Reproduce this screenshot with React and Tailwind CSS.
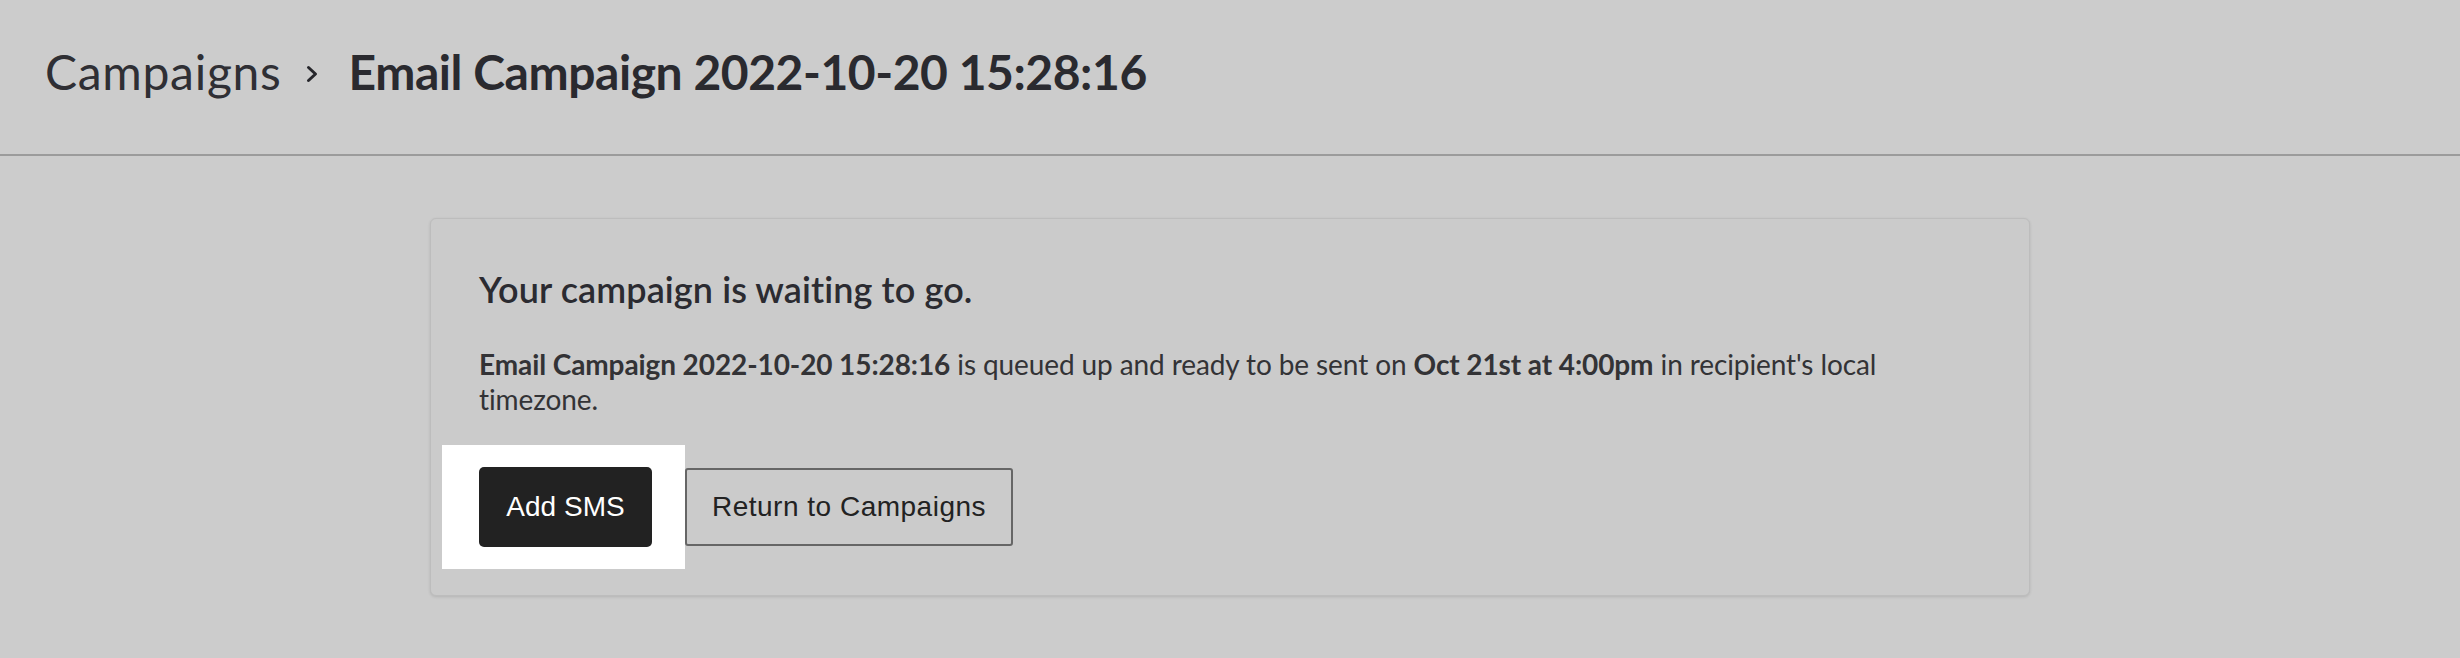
import React from 'react';

const sans = { fontFamily: 'Lato, "Open Sans", sans-serif' };

function Chevron() {
  return (
    <svg width="14" height="18" viewBox="0 0 14 18" className="ml-[23px] mr-[30px] mt-[4px]">
      <path d="M3.5 2.5l7 6.5-7 6.5" fill="none" stroke="#26262b" strokeWidth="3" strokeLinecap="round" strokeLinejoin="round" />
    </svg>
  );
}

export default function App() {
  return (
    <div className="min-h-[658px] w-full bg-[#cccccc] text-[#2c2c31]" style={sans}>
      <header className="flex h-[156px] items-center border-b-2 border-[#9b9b9b] px-[45px] pb-[10px]">
        <span className="text-[48px] font-normal leading-[58px] tracking-[0.7px] text-[#2f2f34]">Campaigns</span>
        <Chevron />
        <span className="text-[48px] font-bold leading-[58px] tracking-[-0.45px] text-[#2a2a2f]">Email Campaign 2022-10-20 15:28:16</span>
      </header>

      <main className="flex justify-center pt-[62px]">
        <section className="w-[1600px] rounded-[6px] border border-[#bdbdbd] bg-[#cbcbcb] p-[48px] shadow-[0_1px_3px_rgba(0,0,0,0.12)]">
          <h2 className="text-[36px] font-semibold leading-[44px] tracking-[0.1px] text-[#2b2b31]">Your campaign is waiting to go.</h2>
          <p className="mt-[36px] max-w-[1450px] text-[28px] leading-[35px] tracking-[-0.1px] text-[#333336]">
            <b className="font-bold">Email Campaign 2022-10-20 15:28:16</b> is queued up and ready to be sent on{' '}
            <b className="font-bold">Oct 21st at 4:00pm</b> in recipient's local timezone.
          </p>
          <div className="mt-[50px] flex items-center" style={{ fontFamily: '"Liberation Sans", Arial, sans-serif' }}>
            <div className="-my-[22px] -ml-[37px] bg-white py-[22px] pl-[37px] pr-[33px]">
              <button className="flex h-[80px] w-[173px] items-center justify-center rounded-[5px] bg-[#222222] text-[28px] text-white">
                Add SMS
              </button>
            </div>
            <button className="flex h-[78px] w-[328px] items-center justify-center rounded-[3px] border-2 border-[#666666] text-[28px] tracking-[0.5px] text-[#222222]">
              Return to Campaigns
            </button>
          </div>
        </section>
      </main>
    </div>
  );
}
